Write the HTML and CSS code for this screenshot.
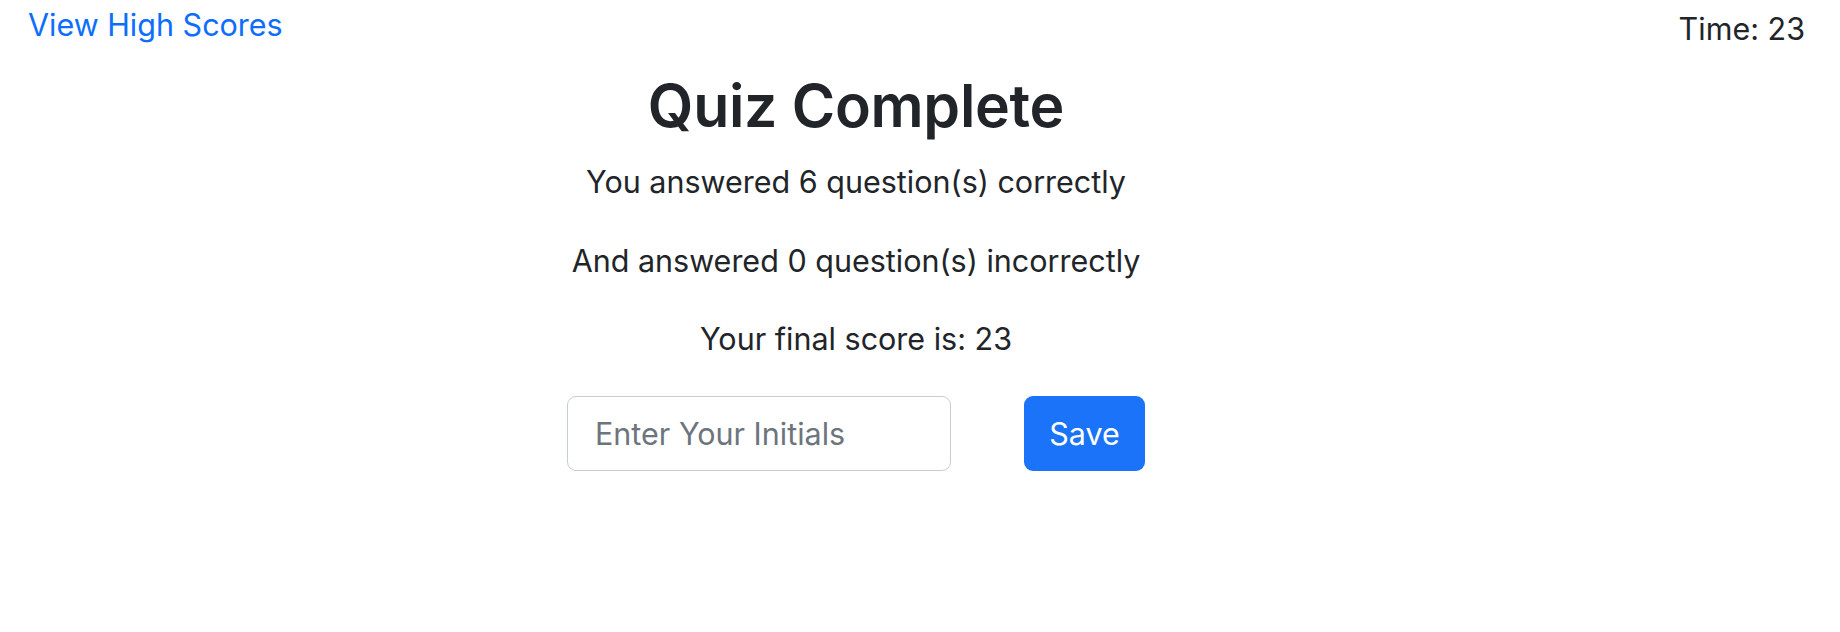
FILE: index.html
```html
<!DOCTYPE html>
<html lang="en">
<head>
<meta charset="utf-8">
<title>Quiz Complete</title>
<link rel="stylesheet" href="styles.css">
</head>
<body>
<header class="topbar">
  <a class="scores-link" href="#">View High Scores</a>
  <span class="timer">Time: 23</span>
</header>
<main class="results">
  <h1 class="title">Quiz Complete</h1>
  <p class="line">You answered 6 question(s) correctly</p>
  <p class="line">And answered 0 question(s) incorrectly</p>
  <p class="line">Your final score is: 23</p>
  <form class="save-form">
    <input class="initials" type="text" placeholder="Enter Your Initials">
    <button class="save-btn" type="button">Save</button>
  </form>
</main>
</body>
</html>
```
FILE: styles.css
```css
* { box-sizing: border-box; }
html, body {
  margin: 0;
  padding: 0;
  background: #fff;
}
body {
  font-family: Inter, "Noto Sans", "Liberation Sans", sans-serif;
  font-size: 30.5px;
  line-height: 1.5;
  color: #212529;
}
.topbar {
  display: flex;
  justify-content: space-between;
  align-items: flex-start;
  height: 48px;
  padding: 2px 35px 0 28px;
}
.scores-link {
  color: #0d6efd;
  text-decoration: none;
}
.timer {
  padding-top: 4px;
}
.results {
  display: flex;
  flex-direction: column;
  align-items: center;
  padding: 23px 128px 0 0;
}
.title {
  font-size: 59px;
  font-weight: 600;
  letter-spacing: -0.3px;
  line-height: 1.2;
  margin: 0 0 17px;
}
.line {
  margin: 0 0 33px;
}
.line:last-of-type {
  margin-bottom: 34px;
}
.save-form {
  display: flex;
  gap: 73px;
}
.initials {
  width: 384px;
  height: 75px;
  border: 1.5px solid #c8cdd3;
  border-radius: 9px;
  padding: 0 27px;
  font-family: inherit;
  font-size: 30.5px;
  color: #212529;
}
.initials::placeholder { color: #6c757d; }
.save-btn {
  width: 121px;
  height: 75px;
  border: none;
  border-radius: 9px;
  background: #1a73f8;
  color: #fff;
  font-family: inherit;
  font-size: 30.5px;
}
```
